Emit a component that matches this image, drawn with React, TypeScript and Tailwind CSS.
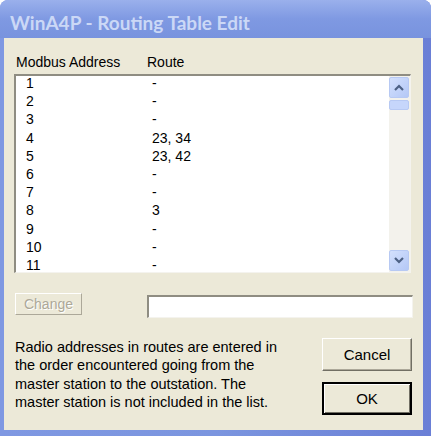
import React from 'react';

const rows: [string, string][] = [
  ['1', '-'],
  ['2', '-'],
  ['3', '-'],
  ['4', '23, 34'],
  ['5', '23, 42'],
  ['6', '-'],
  ['7', '-'],
  ['8', '3'],
  ['9', '-'],
  ['10', '-'],
  ['11', '-'],
];

function ScrollButton({ dir }: { dir: 'up' | 'down' }) {
  return (
    <div className="w-[20px] h-[21px] rounded-[2px] border border-[#b7c9f3] bg-gradient-to-br from-[#d3e0fd] to-[#b4c8f6] flex items-center justify-center">
      <svg width="10" height="7" viewBox="0 0 10 7">
        <path
          d={dir === 'up' ? 'M1 6 L5 2 L9 6' : 'M1 1 L5 5 L9 1'}
          fill="none"
          stroke="#4d6185"
          strokeWidth="2.2"
        />
      </svg>
    </div>
  );
}

export default function App() {
  return (
    <div
      className="w-[431px] h-[436px] flex flex-col rounded-t-[8px] overflow-hidden bg-gradient-to-r from-[#7f98e2] via-[#7b95df] to-[#6a7fd6]"
      style={{ fontFamily: '"Liberation Sans", Arial, sans-serif' }}
    >
      {/* Title bar */}
      <div className="h-[38px] shrink-0 flex items-center pl-[10px] pt-[6px] bg-gradient-to-b from-[#9ab0ec] via-[#7f99e2] to-[#7893de]">
        <span
          className="text-[19px] font-bold text-[#cbd8f6] leading-none"
          style={{ fontFamily: 'Lato, "Open Sans", sans-serif' }}
        >
          WinA4P - Routing Table Edit
        </span>
      </div>

      {/* Body */}
      <div className="flex-1 ml-[4px] mr-[8px] mb-[6px] bg-[#ece9d8] px-[10px] pt-[15px] text-[14px] text-black">
        <div className="flex h-[18px] leading-[18px] pl-[2px]">
          <span className="w-[131px]">Modbus Address</span>
          <span>Route</span>
        </div>

        {/* List box */}
        <div className="mt-[3px] w-[397px] h-[199px] flex border-t-2 border-l-2 border-[#8f8d82] border-r border-b border-r-[#f4f3ee] border-b-[#f4f3ee] bg-white overflow-hidden">
          <div className="flex-1 overflow-hidden -mt-[2px]">
            {rows.map(([addr, route]) => (
              <div key={addr} className="flex h-[18.2px] leading-[18.2px]">
                <span className="w-[136px] pl-[10px]">{addr}</span>
                <span>{route}</span>
              </div>
            ))}
          </div>
          <div className="w-[21px] flex flex-col bg-[#f3f2ec] pt-[1px] pb-[1px]">
            <ScrollButton dir="up" />
            <div className="mt-[2px] w-[20px] h-[10px] rounded-[2px] border border-[#b7c9f3] bg-[#c6d6fb]" />
            <div className="flex-1" />
            <ScrollButton dir="down" />
          </div>
        </div>

        {/* Change row */}
        <div className="flex items-start mt-[20px]">
          <button className="ml-[1px] w-[67px] h-[22px] bg-[#ece9d8] border border-t-white border-l-white border-r-[#aca899] border-b-[#aca899] text-[14px] text-[#aca899] leading-none [text-shadow:1px_1px_0_white]">
            Change
          </button>
          <div className="ml-[65px] mt-[2px] w-[266px] h-[23px] bg-white border-t-2 border-l-2 border-[#8f8d82] border-r border-b border-r-[#f4f3ee] border-b-[#f4f3ee]" />
        </div>

        {/* Help text and buttons */}
        <div className="flex mt-[20px]">
          <p className="ml-[1px] w-[300px] text-[14.5px] leading-[18.3px]">
            Radio addresses in routes are entered in
            <br />
            the order encountered going from the
            <br />
            master station to the outstation. The
            <br />
            master station is not included in the list.
          </p>
          <div className="ml-[7px] flex flex-col gap-[11px]">
            <button className="w-[90px] h-[33px] bg-[#ece9d8] border border-t-white border-l-white border-r-[#716f64] border-b-[#716f64] shadow-[inset_-1px_-1px_0_#aca899] text-[15px] leading-none">
              Cancel
            </button>
            <button className="w-[90px] h-[33px] bg-[#ece9d8] border-2 border-black shadow-[inset_1px_1px_0_white,inset_-1px_-1px_0_#716f64] text-[15px] leading-none">
              OK
            </button>
          </div>
        </div>
      </div>
    </div>
  );
}
